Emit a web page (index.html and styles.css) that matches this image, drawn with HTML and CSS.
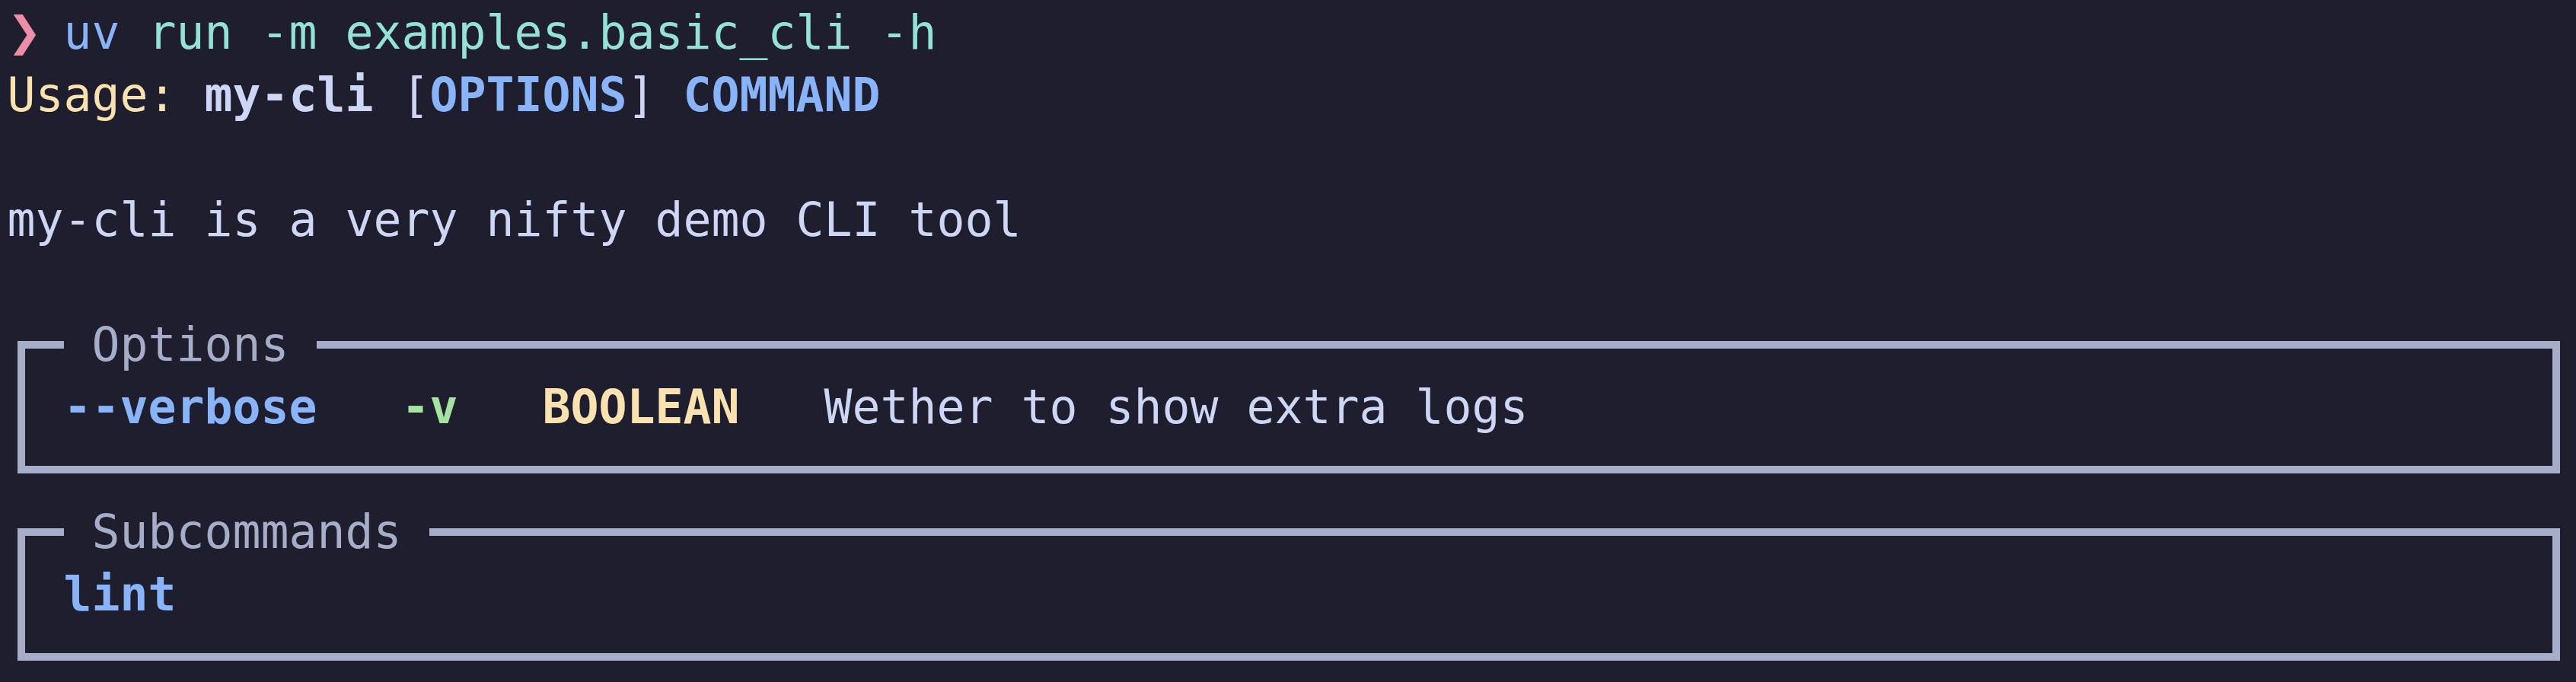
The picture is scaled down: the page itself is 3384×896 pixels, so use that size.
FILE: index.html
```html
<!DOCTYPE html>
<html lang="en">
<head>
<meta charset="utf-8">
<title>my-cli help</title>
<link rel="stylesheet" href="styles.css">
</head>
<body>
<main class="term">
  <div class="line"><span class="prompt">❯</span> <span class="blue">uv</span> <span class="teal">run -m examples.basic_cli -h</span></div>
  <div class="line"><span class="yellow">Usage:</span> <b class="fg">my-cli</b> <span class="fg">[</span><b class="blue">OPTIONS</b><span class="fg">]</span> <b class="blue">COMMAND</b></div>
  <div class="line"> </div>
  <div class="line fg">my-cli is a very nifty demo CLI tool</div>
  <div class="line"> </div>
  <fieldset class="panel">
    <legend class="panel-title"> Options </legend>
    <div class="line"><b class="blue">--verbose</b>   <b class="green">-v</b>   <b class="yellow">BOOLEAN</b>   <span class="fg">Wether to show extra logs</span></div>
  </fieldset>
  <fieldset class="panel">
    <legend class="panel-title"> Subcommands </legend>
    <div class="line"><b class="blue">lint</b></div>
  </fieldset>
</main>
</body>
</html>
```

FILE: styles.css
```css
html, body {
  margin: 0;
  padding: 0;
  background: #1e1e2e;
  overflow: hidden;
}

.term {
  padding: 2px 0 0 9.5px;
  font-family: "DejaVu Sans Mono", "Liberation Mono", monospace;
  font-size: 61.46px;
  line-height: 82px;
  color: #cdd6f4;
}

.line {
  height: 82px;
  white-space: pre;
}

b { font-weight: bold; }

.fg { color: #cdd6f4; }
.blue { color: #89b4fa; }
.teal { color: #94e2d5; }
.yellow { color: #f9e2af; }
.green { color: #a6e3a1; }

.prompt {
  display: inline-block;
  vertical-align: top;
  width: 37px;
  height: 82px;
  line-height: 80px;
  color: #eb8fa8;
  font-family: "DejaVu Sans", sans-serif;
  font-size: 54px;
  font-weight: bold;
  text-align: center;
}

.panel {
  margin: 0 0 36px 13.5px;
  width: 3340px;
  box-sizing: border-box;
  border: 10px solid #a6adc8;
  padding: 0 0 36px 50.5px;
  min-inline-size: 0;
}

.panel:last-child {
  margin-bottom: 0;
}

.panel-title {
  padding: 0;
  margin: 0;
  height: 82px;
  line-height: 82px;
  white-space: pre;
  color: #a6adc8;
}
```
